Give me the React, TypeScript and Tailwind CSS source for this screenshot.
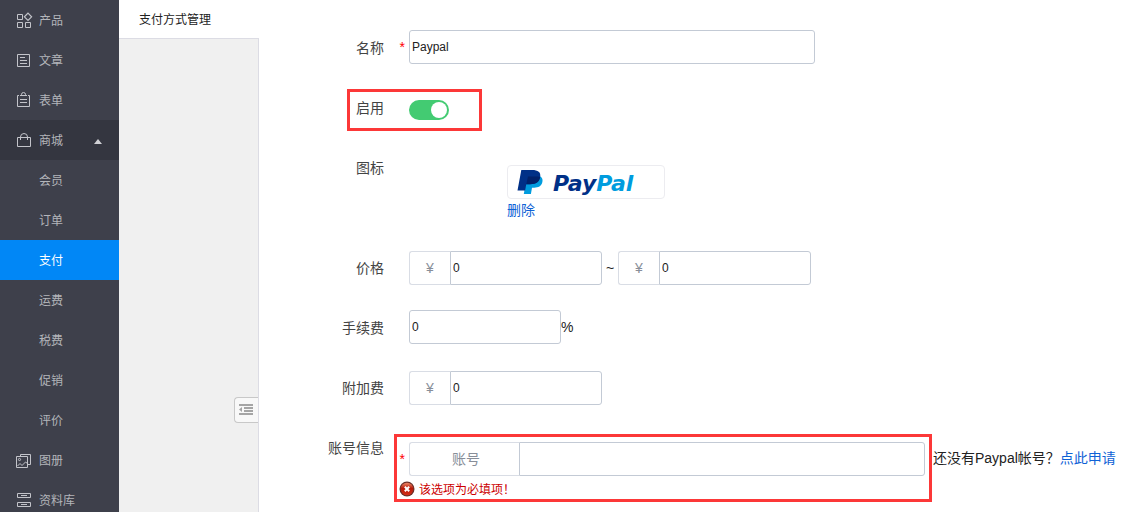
import type { InputHTMLAttributes, ReactNode } from "react";
import clsx from "clsx";

type NavItem = { label: string; icon?: ReactNode; open?: boolean; active?: boolean };

function Glyph({ children }: { children: ReactNode }) {
  return (
    <svg viewBox="0 0 16 16" className="h-4 w-4 shrink-0 overflow-visible" fill="none" stroke="#c3c4ca" strokeWidth="1" aria-hidden="true">
      {children}
    </svg>
  );
}

const ProductIcon = (
  <Glyph>
    <path d="M1.5 2.5h5v5h-5zM1.5 10.5h5v5h-5zM9.5 10.5h5v5h-5z" />
    <path d="M12 1.2l3.6 3.6L12 8.4 8.4 4.8z" strokeWidth="1.2" />
  </Glyph>
);
const ArticleIcon = (
  <Glyph>
    <path d="M1.5 2.5h12v12h-12zM4 5.5h5M4 8.5h7M4 11.5h7" />
  </Glyph>
);
const FormIcon = (
  <Glyph>
    <path d="M3 3.5H1.5v11h12v-11H12M4 3.5h7M5.500 3.500V2.500q0-2 2-2t2 2v1M4 7.500h7M4 10.500h7" />
  </Glyph>
);
const ShopIcon = (
  <Glyph>
    <path d="M1.500 5.500h13v9h-13zM4.500 8V5q0-3.500 3.500-3.500T11.500 5v3" />
  </Glyph>
);
const AlbumIcon = (
  <Glyph>
    <path d="M.5 4.500h11v11H.5zM4.500 4V2.500h10v10H12M1.500 14l2.500-2.500 2 2 3.500-3.500 2 1.500" />
    <circle cx="3.500" cy="7.500" r="1.100" />
  </Glyph>
);
const LibraryIcon = (
  <Glyph>
    <path d="M1.500 1.500h13v4h-13zM1.500 10.500h13v4h-13zM5 3.500h6M5 12.500h6" />
  </Glyph>
);

const items: NavItem[] = [
  { label: "产品", icon: ProductIcon },
  { label: "文章", icon: ArticleIcon },
  { label: "表单", icon: FormIcon },
  { label: "商城", icon: ShopIcon, open: true },
  { label: "会员" },
  { label: "订单" },
  { label: "支付", active: true },
  { label: "运费" },
  { label: "税费" },
  { label: "促销" },
  { label: "评价" },
  { label: "图册", icon: AlbumIcon },
  { label: "资料库", icon: LibraryIcon },
];

function Sidebar() {
  return (
    <nav className="w-[119px] shrink-0 bg-[#3e404b] text-xs text-[#b3b5ba]">
      <ul>
        {items.map((item) => (
          <li key={item.label}>
            <a
              href="#"
              className={clsx(
                "flex h-10 items-center gap-[7px] pl-4",
                item.active && "bg-[#0187f6] text-white",
                item.open && "bg-[#343640]",
              )}
            >
              {item.icon ?? <span className="w-4" />}
              <span className="pt-0.5">{item.label}</span>
              {item.open && (
                <svg viewBox="0 0 8 5" className="mt-0.5 mr-[17px] ml-auto h-[5px] w-2" fill="#d0d1d5" aria-hidden="true">
                  <path d="M0 5L4 0l4 5z" />
                </svg>
              )}
            </a>
          </li>
        ))}
      </ul>
    </nav>
  );
}

function SubPanel() {
  return (
    <aside className="flex w-[140px] shrink-0 flex-col">
      <h1 className="h-[39px] border-b border-[#dcdce4] pl-5 text-xs leading-10 text-[#222]">支付方式管理</h1>
      <div className="flex flex-1 flex-col items-end justify-end border-r border-[#dcdce4] bg-[#f0f0f0] pb-[89px]">
        <button
          type="button"
          aria-label="收起"
          className="flex h-[26px] w-6 items-center rounded-l border border-r-0 border-[#c8c8c8] bg-[#f8f8f8] pl-1"
        >
          <svg viewBox="0 0 14 12" className="h-3 w-3.5" fill="#a5a5a5" aria-hidden="true">
            <path d="M0 0h14v2H0zM5 3h9v2H5zM5 6h9v2H5zM0 9h14v2H0zM3 3v5L0 5.500z" />
          </svg>
        </button>
      </div>
    </aside>
  );
}

function Row({ label, htmlFor, required, pad, children }: {
  label: string; htmlFor?: string; required?: boolean; pad: string; children: ReactNode;
}) {
  return (
    <div className="flex min-h-[60px]">
      <label htmlFor={htmlFor} className="w-[125px] shrink-0 text-right leading-[60px] text-[#444]">{label}</label>
      <div className={clsx("w-[25px] shrink-0 pr-1 text-right leading-[34px] text-[#f00]", pad)}>{required && "*"}</div>
      <div className={clsx("min-w-0 flex-1", pad)}>{children}</div>
    </div>
  );
}

function Field({ className, ...rest }: InputHTMLAttributes<HTMLInputElement>) {
  return (
    <input
      type="text"
      className={clsx("h-[34px] border border-[#c3cad5] bg-white pl-[2px] text-xs text-[#222] outline-none", className)}
      {...rest}
    />
  );
}

function Money({ id, label }: { id: string; label: string }) {
  return (
    <div className="flex">
      <span className="w-[41px] rounded-l-[3px] border border-r-0 border-[#d9dde5] text-center leading-8 text-[#888e99]">¥</span>
      <Field id={id} aria-label={label} defaultValue="0" className="w-[152px] rounded-r-[3px]" />
    </div>
  );
}

function PaypalLogo() {
  return (
    <div className="flex h-[34px] w-[158px] items-center gap-[10px] rounded-sm border border-[#ececf0] pl-[9px]">
      <svg viewBox="0 0 26 24" className="h-6 w-[26px] shrink-0" aria-hidden="true">
        <path fill="#009cde" d="M10 6.500h13.500c2 1.500 2.400 3.500 1.800 5.800-1 4-4 5.400-8 5.400h-2.300L13.900 24H6.800z" />
        <path fill="#003087" d="M4.300 0H15c6 0 9 2 8.200 7-1 5-4.200 7.200-10 7.200H9.300L8.100 20.500H.5z" />
        <path fill="#012169" d="M11 6.500h9.500c1.200 0 2 .200 2.700.500-1 5-4.200 7.200-10 7.200H9.300z" />
      </svg>
      <span className="pt-1 font-['DejaVu_Sans',sans-serif] text-[22px] leading-6 font-bold text-[#003087] italic">
        Pay<span className="text-[#009cde]">Pal</span>
      </span>
    </div>
  );
}

function ErrorIcon() {
  return (
    <svg viewBox="0 0 16 16" className="h-4 w-4 shrink-0" aria-hidden="true">
      <defs>
        <linearGradient id="ball" x1="0" y1="0" x2="0" y2="1">
          <stop offset="0" stopColor="#f08a68" />
          <stop offset="0.450" stopColor="#b51a0a" />
          <stop offset="1" stopColor="#d63018" />
        </linearGradient>
      </defs>
      <circle cx="8" cy="8" r="7.500" fill="#6b3029" />
      <circle cx="8" cy="8" r="6.300" fill="url(#ball)" />
      <path d="M5.800 5.800l4.400 4.400M10.200 5.800l-4.400 4.400" stroke="#fff" strokeWidth="2" />
    </svg>
  );
}

export default function App() {
  return (
    <div className="flex h-screen overflow-hidden bg-white font-['Liberation_Sans','Noto_Sans_CJK_SC',sans-serif]">
      <Sidebar />
      <SubPanel />
      <main className="min-w-0 flex-1 pt-[18px] text-sm text-[#222]">
        <form>
          <Row label="名称" htmlFor="name" required pad="pt-3">
            <Field id="name" defaultValue="Paypal" className="w-[406px] rounded-[3px]" />
          </Row>
          <div className="relative">
            <Row label="启用" htmlFor="enabled" pad="pt-[22px]">
              <input
                id="enabled"
                type="checkbox"
                role="switch"
                defaultChecked
                className="block h-5 w-10 appearance-none rounded-full bg-[#ccc] p-0.5 before:block before:h-4 before:w-4 before:rounded-full before:bg-white checked:bg-[#43cb72] checked:before:ml-5"
              />
            </Row>
            <div className="pointer-events-none absolute top-[11px] left-[88px] h-[42px] w-[135px] border-3 border-[#fc3838]" />
          </div>
          <Row label="图标" pad="pt-[27px]">
            <div className="h-[73px] pl-[98px]">
              <PaypalLogo />
              <a href="#" className="leading-[22px] text-[#0f62d6]">删除</a>
            </div>
          </Row>
          <Row label="价格" htmlFor="price-min" pad="pt-[13px]">
            <div className="flex">
              <Money id="price-min" label="最低价格" />
              <span className="w-4 text-center leading-[34px]">~</span>
              <Money id="price-max" label="最高价格" />
            </div>
          </Row>
          <Row label="手续费" htmlFor="fee" pad="pt-3">
            <div className="flex">
              <Field id="fee" defaultValue="0" className="w-[152px] rounded-[3px]" />
              <span className="leading-[34px]">%</span>
            </div>
          </Row>
          <Row label="附加费" htmlFor="extra" pad="pt-[13px]">
            <Money id="extra" label="附加费" />
          </Row>
          <div className="relative">
            <Row label="账号信息" htmlFor="account" required pad="pt-6">
              <div className="flex gap-2">
                <div className="flex">
                  <span className="w-[110px] rounded-l-[3px] border border-r-0 border-[#d9dde5] pl-[3px] text-center leading-8 text-[#888e99]">账号</span>
                  <Field id="account" className="w-[406px] rounded-r-[3px]" />
                </div>
                <p className="leading-8 whitespace-nowrap">
                  还没有Paypal帐号？<a href="#" className="text-[#0f62d6]">点此申请</a>
                </p>
              </div>
              <p className="-ml-[10px] flex h-[26px] items-center gap-1 text-xs text-[#c00]">
                <ErrorIcon />
                <span className="pt-0.5">该选项为必填项！</span>
              </p>
            </Row>
            <div className="pointer-events-none absolute top-4 left-[135px] h-[68px] w-[538px] border-3 border-[#fc3838]" />
          </div>
        </form>
      </main>
    </div>
  );
}
